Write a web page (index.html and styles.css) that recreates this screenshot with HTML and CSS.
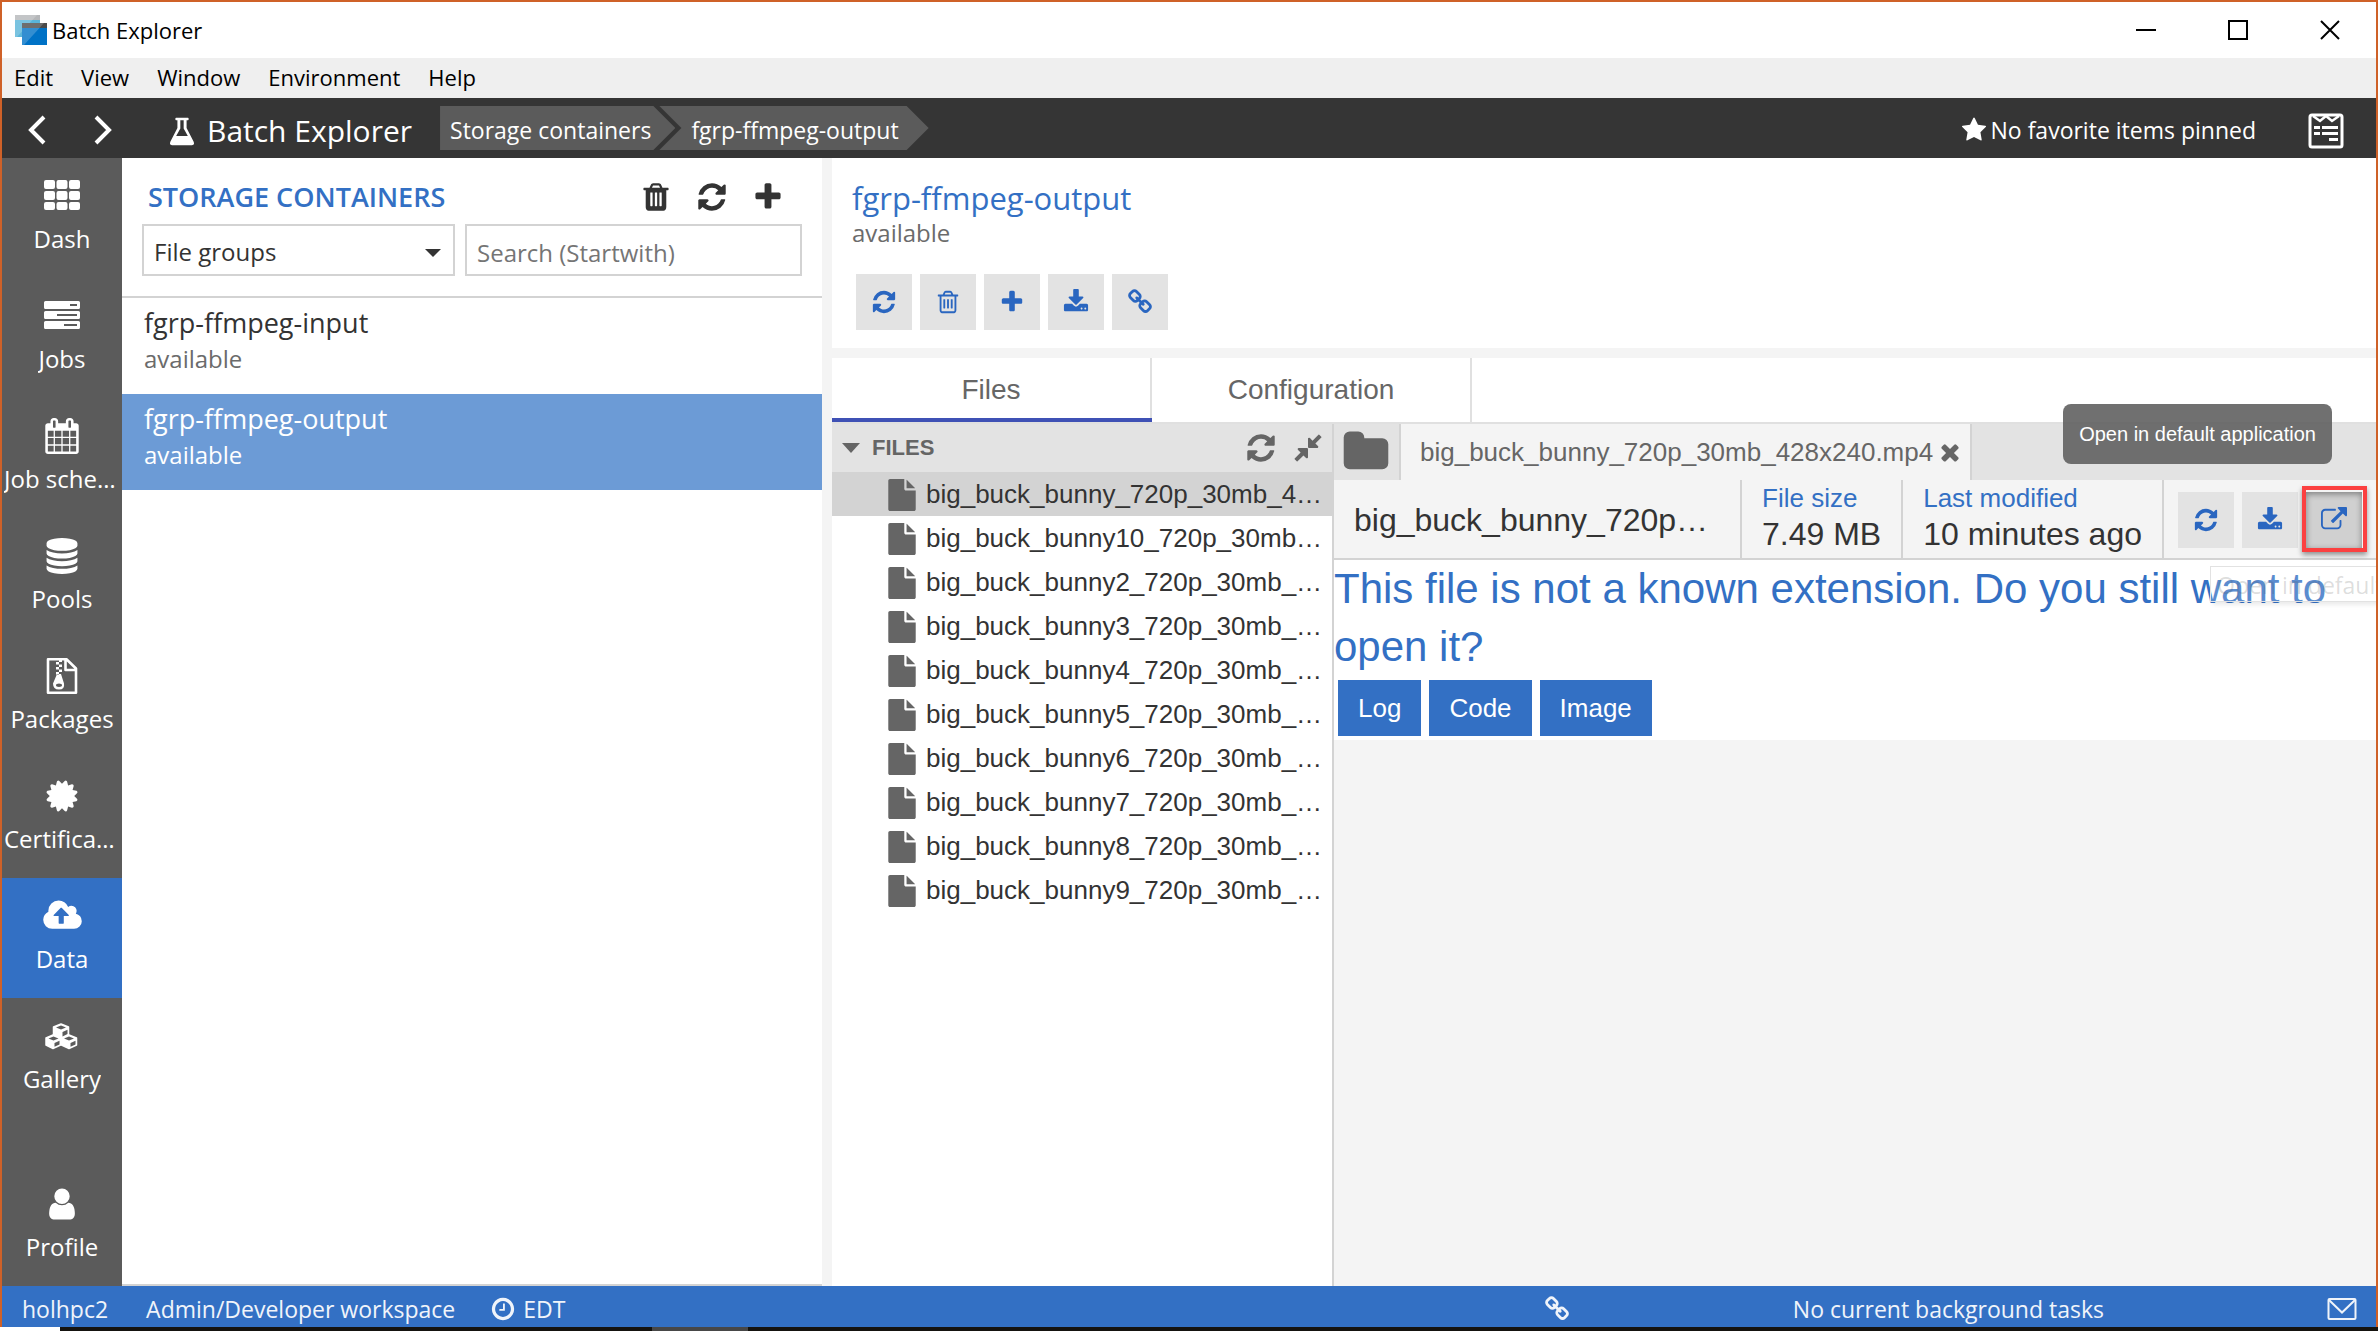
FILE: index.html
```html
<!DOCTYPE html>
<html lang="en">
<head>
<meta charset="utf-8">
<title>Batch Explorer</title>
<link rel="stylesheet" href="styles.css">
</head>
<body>
<svg class="sprite" aria-hidden="true">
  <symbol id="refresh" viewBox="0 0 1792 1792"><path d="M1639 1056q0 5-1 7-64 268-268 434.500t-478 166.500q-146 0-282.500-55t-243.500-157l-129 129q-19 19-45 19t-45-19-19-45v-448q0-26 19-45t45-19h448q26 0 45 19t19 45-19 45l-137 137q71 66 161 102t187 36q134 0 250-65t186-179q11-17 53-117 8-23 30-23h192q13 0 22.500 9.500t9.500 22.500zm25-800v448q0 26-19 45t-45 19h-448q-26 0-45-19t-19-45 19-45l138-138q-148-137-349-137-134 0-250 65t-186 179q-11 17-53 117-8 23-30 23h-199q-13 0-22.500-9.500t-9.500-22.500v-7q65-268 270-434.500t480-166.500q146 0 284 55.500t245 156.500l130-129q19-19 45-19t45 19 19 45z"/></symbol>
  <symbol id="plus" viewBox="0 0 1792 1792"><path d="M1600 736v192q0 40-28 68t-68 28h-416v416q0 40-28 68t-68 28h-192q-40 0-68-28t-28-68v-416h-416q-40 0-68-28t-28-68v-192q0-40 28-68t68-28h416v-416q0-40 28-68t68-28h192q40 0 68 28t28 68v416h416q40 0 68 28t28 68z"/></symbol>
  <symbol id="star" viewBox="0 0 1792 1792"><path d="M1728 647q0 22-26 48l-363 354 86 500q1 7 1 20 0 21-10.500 35.500t-30.500 14.500q-19 0-40-12l-449-236-449 236q-22 12-40 12-21 0-31.500-14.500t-10.500-35.500q0-6 2-20l86-500-364-354q-25-27-25-48 0-37 56-46l502-73 225-455q19-41 49-41t49 41l225 455 502 73q56 9 56 46z"/></symbol>
  <symbol id="times" viewBox="0 0 1792 1792"><path d="M1490 1322q0 40-28 68l-136 136q-28 28-68 28t-68-28l-294-294-294 294q-28 28-68 28t-68-28l-136-136q-28-28-28-68t28-68l294-294-294-294q-28-28-28-68t28-68l136-136q28-28 68-28t68 28l294 294 294-294q28-28 68-28t68 28l136 136q28 28 28 68t-28 68l-294 294 294 294q28 28 28 68z"/></symbol>
  <symbol id="trash-o" viewBox="0 0 1792 1792"><path d="M704 736v576q0 14-9 23t-23 9h-64q-14 0-23-9t-9-23v-576q0-14 9-23t23-9h64q14 0 23 9t9 23zm256 0v576q0 14-9 23t-23 9h-64q-14 0-23-9t-9-23v-576q0-14 9-23t23-9h64q14 0 23 9t9 23zm256 0v576q0 14-9 23t-23 9h-64q-14 0-23-9t-9-23v-576q0-14 9-23t23-9h64q14 0 23 9t9 23zm128 724v-948h-896v948q0 22 7 40.500t14.500 27 10.500 8.500h832q3 0 10.500-8.500t14.500-27 7-40.500zm-672-1076h448l-48-117q-7-9-17-11h-317q-10 2-17 11zm928 32v64q0 14-9 23t-23 9h-96v948q0 83-47 143.500t-113 60.500h-832q-66 0-113-58.500t-47-141.500v-952h-96q-14 0-23-9t-9-23v-64q0-14 9-23t23-9h309l70-167q15-37 54-63t79-26h320q40 0 79 26t54 63l70 167h309q14 0 23 9t9 23z"/></symbol>
  <symbol id="trash" viewBox="0 0 1792 1792"><path d="M704 1376v-704q0-14-9-23t-23-9h-64q-14 0-23 9t-9 23v704q0 14 9 23t23 9h64q14 0 23-9t9-23zm256 0v-704q0-14-9-23t-23-9h-64q-14 0-23 9t-9 23v704q0 14 9 23t23 9h64q14 0 23-9t9-23zm256 0v-704q0-14-9-23t-23-9h-64q-14 0-23 9t-9 23v704q0 14 9 23t23 9h64q14 0 23-9t9-23zm-544-992h448l-48-117q-7-9-17-11h-317q-10 2-17 11zm928 32v64q0 14-9 23t-23 9h-96v948q0 83-47 143.500t-113 60.500h-832q-66 0-113-58.500t-47-141.500v-952h-96q-14 0-23-9t-9-23v-64q0-14 9-23t23-9h309l70-167q15-37 54-63t79-26h320q40 0 79 26t54 63l70 167h309q14 0 23 9t9 23z"/></symbol>
  <symbol id="download" viewBox="0 0 1792 1792"><path d="M1344 1344q0-26-19-45t-45-19-45 19-19 45 19 45 45 19 45-19 19-45zm256 0q0-26-19-45t-45-19-45 19-19 45 19 45 45 19 45-19 19-45zm128-224v320q0 40-28 68t-68 28h-1472q-40 0-68-28t-28-68v-320q0-40 28-68t68-28h465l135 136q58 56 136 56t136-56l136-136h464q40 0 68 28t28 68zm-325-569q17 41-14 70l-448 448q-18 19-45 19t-45-19l-448-448q-31-29-14-70 17-39 59-39h256v-448q0-26 19-45t45-19h256q26 0 45 19t19 45v448h256q42 0 59 39z"/></symbol>
  <symbol id="link" viewBox="0 0 1792 1792"><path d="M1520 1216q0-40-28-68l-208-208q-28-28-68-28-42 0-72 32 3 3 19 18.500t21.500 21.500 15 19 13 25.500 3.500 27.500q0 40-28 68t-68 28q-15 0-27.500-3.500t-25.500-13-19-15-21.500-21.500-18.500-19q-33 31-33 73 0 40 28 68l206 207q27 27 68 27 40 0 68-26l147-146q28-28 28-67zm-703-705q0-40-28-68l-206-207q-28-28-68-28-39 0-68 27l-147 146q-28 28-28 67 0 40 28 68l208 208q27 27 68 27 42 0 72-31-3-3-19-18.500t-21.500-21.500-15-19-13-25.500-3.500-27.500q0-40 28-68t68-28q15 0 27.500 3.500t25.500 13 19 15 21.500 21.500 18.500 19q33-31 33-73zm895 705q0 120-85 203l-147 146q-83 83-203 83-121 0-204-85l-206-207q-83-83-83-203 0-123 88-209l-88-88q-86 88-208 88-120 0-204-84l-208-208q-84-84-84-204t85-203l147-146q83-83 203-83 121 0 204 85l206 207q83 83 83 203 0 123-88 209l88 88q86-88 208-88 120 0 204 84l208 208q84 84 84 204z"/></symbol>
  <symbol id="external" viewBox="0 0 1792 1792"><path d="M1408 928v320q0 119-84.500 203.500t-203.500 84.500h-832q-119 0-203.500-84.500t-84.500-203.500v-832q0-119 84.500-203.500t203.500-84.500h704q14 0 23 9t9 23v64q0 14-9 23t-23 9h-704q-66 0-113 47t-47 113v832q0 66 47 113t113 47h832q66 0 113-47t47-113v-320q0-14 9-23t23-9h64q14 0 23 9t9 23zm384-864v512q0 26-19 45t-45 19-45-19l-176-176-652 652q-10 10-23 10t-23-10l-114-114q-10-10-10-23t10-23l652-652-176-176q-19-19-19-45t19-45 45-19h512q26 0 45 19t19 45z"/></symbol>
  <symbol id="cloud" viewBox="-64 0 1920 1792"><path d="M1216 864q0-14-9-23l-352-352q-9-9-23-9t-23 9l-351 351q-10 12-10 24 0 14 9 23t23 9h224v352q0 13 9.500 22.500t22.500 9.500h192q13 0 22.500-9.500t9.500-22.500v-352h224q13 0 22.500-9.500t9.500-22.500zm640 288q0 159-112.500 271.500t-271.500 112.500h-1088q-185 0-316.500-131.500t-131.500-316.500q0-130 70-240t188-165q-2-30-2-43 0-212 150-362t362-150q156 0 285.500 87t188.500 231q71-62 166-62 106 0 181 75t75 181q0 76-41 138 130 31 213.500 135.500t83.500 238.500z"/></symbol>
  <symbol id="certificate" viewBox="0 0 1792 1792"><path d="M1504 896l138 135q30 28 20 70-12 41-52 51l-188 48 53 186q12 41-19 70-29 31-70 19l-186-53-48 188q-10 40-51 52-12 2-19 2-31 0-51-22l-135-138-135 138q-28 30-70 20-41-11-51-52l-48-188-186 53q-41 12-70-19-31-29-19-70l53-186-188-48q-40-10-52-51-10-42 20-70l138-135-138-135q-30-28-20-70 12-41 52-51l188-48-53-186q-12-41 19-70 29-31 70-19l186 53 48-188q10-41 51-51 41-12 70 19l135 139 135-139q29-30 70-19 41 10 51 51l48 188 186-53q41-12 70 19 31 29 19 70l-53 186 188 48q40 10 52 51 10 42-20 70z"/></symbol>
  <symbol id="user" viewBox="0 0 1792 1792"><path d="M1536 1399q0 109-62.500 187t-150.500 78h-854q-88 0-150.500-78t-62.500-187q0-85 8.500-160.500t31.500-152 58.500-131 94-89 134.500-34.500q131 128 313 128t313-128q76 0 134.500 34.500t94 89 58.500 131 31.500 152 8.500 160.500zm-256-887q0 159-112.500 271.500t-271.500 112.500-271.500-112.500-112.500-271.500 112.500-271.500 271.500-112.500 271.500 112.500 112.500 271.500z"/></symbol>
  <symbol id="database" viewBox="0 0 1792 1792"><path d="M896 768q237 0 443-43t325-127v170q0 69-103 128t-280 93.500-385 34.500-385-34.500-280-93.500-103-128v-170q119 84 325 127t443 43zm0 768q237 0 443-43t325-127v170q0 69-103 128t-280 93.500-385 34.500-385-34.500-280-93.500-103-128v-170q119 84 325 127t443 43zm0-384q237 0 443-43t325-127v170q0 69-103 128t-280 93.500-385 34.500-385-34.500-280-93.500-103-128v-170q119 84 325 127t443 43zm0-1152q208 0 385 34.500t280 93.500 103 128v128q0 69-103 128t-280 93.500-385 34.500-385-34.500-280-93.500-103-128v-128q0-69 103-128t280-93.500 385-34.500z"/></symbol>
  <symbol id="compress" viewBox="0 0 1792 1792"><path d="M896 960v448q0 26-19 45t-45 19-45-19l-144-144-332 332q-10 10-23 10t-23-10l-114-114q-10-10-10-23t10-23l332-332-144-144q-19-19-19-45t19-45 45-19h448q26 0 45 19t19 45zm755-672q0 13-10 23l-332 332 144 144q19 19 19 45t-19 45-45 19h-448q-26 0-45-19t-19-45v-448q0-26 19-45t45-19 45 19l144 144 332-332q10-10 23-10t23 10l114 114q10 10 10 23z"/></symbol>
  <symbol id="folder" viewBox="0 0 1792 1792"><path d="M1728 608v704q0 92-66 158t-158 66h-1216q-92 0-158-66t-66-158v-960q0-92 66-158t158-66h320q92 0 158 66t66 158v32h672q92 0 158 66t66 158z"/></symbol>
  <symbol id="file" viewBox="0 0 1792 1792"><path d="M1152 512v-472q22 14 36 28l408 408q14 14 28 36h-472zm-128 32q0 40 28 68t68 28h544v1056q0 40-28 68t-68 28h-1344q-40 0-68-28t-28-68v-1600q0-40 28-68t68-28h800v544z"/></symbol>
  <symbol id="calendar" viewBox="0 0 1792 1792"><path d="M192 1664h288v-288h-288v288zm352 0h320v-288h-320v288zm-352-352h288v-320h-288v320zm352 0h320v-320h-320v320zm-352-384h288v-288h-288v288zm736 736h320v-288h-320v288zm-384-736h320v-288h-320v288zm768 736h288v-288h-288v288zm-384-352h320v-320h-320v320zm-352-864v-288q0-13-9.500-22.500t-22.500-9.500h-64q-13 0-22.500 9.500t-9.500 22.500v288q0 13 9.500 22.500t22.500 9.500h64q13 0 22.500-9.500t9.500-22.500zm736 864h288v-320h-288v320zm-384-384h320v-288h-320v288zm384 0h288v-288h-288v288zm32-480v-288q0-13-9.500-22.500t-22.500-9.500h-64q-13 0-22.500 9.500t-9.500 22.500v288q0 13 9.500 22.500t22.500 9.500h64q13 0 22.500-9.500t9.500-22.500zm384-64v1280q0 52-38 90t-90 38h-1408q-52 0-90-38t-38-90v-1280q0-52 38-90t90-38h128v-96q0-66 47-113t113-47h64q66 0 113 47t47 113v96h384v-96q0-66 47-113t113-47h64q66 0 113 47t47 113v96h128q52 0 90 38t38 90z"/></symbol>
  <symbol id="clock" viewBox="0 0 1792 1792"><path d="M1024 544v448q0 14-9 23t-23 9h-320q-14 0-23-9t-9-23v-64q0-14 9-23t23-9h224v-352q0-14 9-23t23-9h64q14 0 23 9t9 23zm416 352q0-148-73-273t-198-198-273-73-273 73-198 198-73 273 73 273 198 198 273 73 273-73 198-198 73-273zm224 0q0 209-103 385.500t-279.500 279.500-385.500 103-385.500-103-279.500-279.500-103-385.500 103-385.500 279.500-279.500 385.500-103 385.500 103 279.500 279.500 103 385.500z"/></symbol>
  <symbol id="grid" viewBox="0 0 36 36"><path d="M2 2h7q2 0 2 2v5q0 2-2 2H2q-2 0-2-2V4q0-2 2-2zm12.500 0h7q2 0 2 2v5q0 2-2 2h-7q-2 0-2-2V4q0-2 2-2zM27 2h7q2 0 2 2v5q0 2-2 2h-7q-2 0-2-2V4q0-2 2-2zM2 13h7q2 0 2 2v5q0 2-2 2H2q-2 0-2-2v-5q0-2 2-2zm12.500 0h7q2 0 2 2v5q0 2-2 2h-7q-2 0-2-2v-5q0-2 2-2zM27 13h7q2 0 2 2v5q0 2-2 2h-7q-2 0-2-2v-5q0-2 2-2zM2 24h7q2 0 2 2v4q0 2-2 2H2q-2 0-2-2v-4q0-2 2-2zm12.500 0h7q2 0 2 2v4q0 2-2 2h-7q-2 0-2-2v-4q0-2 2-2zM27 24h7q2 0 2 2v4q0 2-2 2h-7q-2 0-2-2v-4q0-2 2-2z"/></symbol>
  <symbol id="tasks" viewBox="0 0 36 36"><path fill-rule="evenodd" d="M1.500 3h33Q36 3 36 4.500v5q0 1.500-1.500 1.500h-33Q0 11 0 9.500v-5Q0 3 1.500 3zM26 6v2h7V6zM1.500 13h33q1.500 0 1.500 1.500v5q0 1.500-1.500 1.500h-33Q0 21 0 19.500v-5Q0 13 1.500 13zM13 16v2h20v-2zM1.500 23h33q1.500 0 1.500 1.500v5q0 1.500-1.500 1.500h-33Q0 31 0 29.500v-5Q0 23 1.500 23zM20 26v2h13v-2z"/></symbol>
  <symbol id="zip" viewBox="0 0 36 36"><path fill="none" stroke="currentColor" stroke-width="2.600" stroke-linejoin="round" d="M4 1.300h18.500L32 10.500v24.200H4zM21.500 1.500V12H32"/><path fill-rule="evenodd" d="M15 1h3v3h-3zM12 4h3v2.500h-3zM15 6.500h3V9h-3zM12 9h3v2.500h-3zM15 11.500h3V14h-3zM12 14h3v2.500h-3zM13 16h4l3 9.500q1 6-5 6t-6-6zM15 25.500q-3 0-3 1.700t3 1.700 3-1.700-3-1.700z"/></symbol>
  <symbol id="cubes" viewBox="0 0 36 36"><g fill="currentColor" stroke="currentColor" stroke-width="1.500" stroke-linejoin="round"><path d="M17 6l7.500 3v8L17 20l-7.500-3V9z"/><path d="M9 17l7.500 3v7L9 30.500 2 27v-7z"/><path d="M25 17l7.500 3v7L25 30.500 17.500 27v-7z"/></g><g class="cube-holes"><path d="M17 7.500l5 2-5 2-5-2zM9.500 18.500l5 2-5 2-5-2zM25 18.500l5 2-5 2-5-2zM18.500 14l5-2.200v4.200l-5 2.400zM10.500 25l5-2.200v3.600l-5 2.400zM26.500 25l5-2.200v3.600l-5 2.400z"/></g></symbol>
  <symbol id="flask" viewBox="0 0 32 36"><path fill-rule="evenodd" d="M9 2h14q1 0 1 1.500T23 5h-1.500v9.500L30 31q1.500 4-2 4H4q-3.500 0-2-4l8.500-16.500V5H9Q8 5 8 3.500T9 2zM14 5v10l-5 9h14l-5-9V5z"/></symbol>
  <symbol id="left" viewBox="0 0 20 30"><path fill="none" stroke="currentColor" stroke-width="4" d="M17 2L4 15l13 13"/></symbol>
  <symbol id="right" viewBox="0 0 20 30"><path fill="none" stroke="currentColor" stroke-width="4" d="M3 2l13 13L3 28"/></symbol>
  <symbol id="report" viewBox="0 0 36 36"><rect x="2" y="2" width="32" height="32" rx="2" fill="none" stroke="currentColor" stroke-width="3"/><path fill="none" stroke="currentColor" stroke-width="2.500" d="M5 3l7 5 6-5 6 5 7-5"/><path d="M6 13h6v3H6zM14 13h16v3H14zM6 19h6v3H6zM14 19h16v3H14zM21 25h9v3h-9z"/></symbol>
  <symbol id="mail" viewBox="0 0 30 24"><rect x="1.500" y="2" width="27" height="20" rx="1" fill="none" stroke="currentColor" stroke-width="2"/><path fill="none" stroke="currentColor" stroke-width="2" d="M2 3l13 12.500L28 3"/></symbol>
  <symbol id="win-min" viewBox="0 0 20 20"><path d="M0 9h20v2H0z"/></symbol>
  <symbol id="win-max" viewBox="0 0 20 20"><path fill="none" stroke="currentColor" stroke-width="2" d="M1 1h18v18H1z"/></symbol>
  <symbol id="win-close" viewBox="0 0 20 20"><path fill="none" stroke="currentColor" stroke-width="2" d="M1 1l18 18M19 1L1 19"/></symbol>
  <symbol id="logo" viewBox="0 0 32 30"><path fill="#59b4d9" d="M0 0h25v22H0z"/><path fill="#b5b7b9" d="M0 0h25v5H0z"/><path fill="#fff" opacity=".2" d="M0 0h22L2 22H0z"/><path fill="#0072c6" d="M7 8h25v22H7z"/><path fill="#4a4a4a" d="M7 8h25v5H7z"/><path fill="#fff" opacity=".2" d="M7 8h22L9 30H7z"/></symbol>
</svg>

<div class="window">
  <header class="titlebar">
    <svg class="logo"><use href="#logo"/></svg>
    <span class="window-title">Batch Explorer</span>
    <button class="win-btn" aria-label="Minimize"><svg><use href="#win-min"/></svg></button>
    <button class="win-btn" aria-label="Maximize"><svg><use href="#win-max"/></svg></button>
    <button class="win-btn" aria-label="Close"><svg><use href="#win-close"/></svg></button>
  </header>
  <nav class="menubar" aria-label="Menu">
    <a href="#">Edit</a><a href="#">View</a><a href="#">Window</a><a href="#">Environment</a><a href="#">Help</a>
  </nav>
  <div class="toolbar">
    <div class="history">
      <button aria-label="Back"><svg><use href="#left"/></svg></button>
      <button aria-label="Forward"><svg><use href="#right"/></svg></button>
    </div>
    <h1 class="brand"><svg><use href="#flask"/></svg>Batch Explorer</h1>
    <nav class="crumbs" aria-label="Breadcrumb">
      <a class="crumb" href="#">Storage containers</a>
      <a class="crumb crumb-next" href="#">fgrp-ffmpeg-output</a>
    </nav>
    <button class="favorites"><svg class="icon i26"><use href="#star"/></svg>No favorite items pinned</button>
    <button class="report" aria-label="Notifications"><svg class="icon i36"><use href="#report"/></svg></button>
  </div>

  <div class="body">
    <nav class="sidebar" aria-label="Main">
      <a href="#"><svg class="icon i36"><use href="#grid"/></svg><span>Dash</span></a>
      <a href="#"><svg class="icon i36"><use href="#tasks"/></svg><span>Jobs</span></a>
      <a href="#"><svg class="icon i36"><use href="#calendar"/></svg><span>Job schedules</span></a>
      <a href="#"><svg class="icon i36"><use href="#database"/></svg><span>Pools</span></a>
      <a href="#"><svg class="icon i36"><use href="#zip"/></svg><span>Packages</span></a>
      <a href="#"><svg class="icon i36"><use href="#certificate"/></svg><span>Certificates</span></a>
      <a href="#" class="active"><svg class="icon i36 wide"><use href="#cloud"/></svg><span>Data</span></a>
      <a href="#"><svg class="icon i36"><use href="#cubes"/></svg><span>Gallery</span></a>
      <a href="#" class="profile"><svg class="icon i36"><use href="#user"/></svg><span>Profile</span></a>
    </nav>

    <section class="browse">
      <div class="browse-head">
        <div class="browse-title">
          <h2>STORAGE CONTAINERS</h2>
          <button aria-label="Delete"><svg class="icon i32"><use href="#trash"/></svg></button>
          <button aria-label="Refresh"><svg class="icon i32"><use href="#refresh"/></svg></button>
          <button aria-label="Add"><svg class="icon i32"><use href="#plus"/></svg></button>
        </div>
        <div class="filters">
          <div class="select-wrap"><select aria-label="Container type"><option>File groups</option></select></div>
          <input type="text" aria-label="Search" placeholder="Search (Startwith)">
        </div>
      </div>
      <a class="container-item" href="#"><span class="name">fgrp-ffmpeg-input</span><span class="state">available</span></a>
      <a class="container-item selected" href="#"><span class="name">fgrp-ffmpeg-output</span><span class="state">available</span></a>
    </section>

    <main class="details">
      <section class="summary">
        <h2>fgrp-ffmpeg-output</h2>
        <p>available</p>
        <div class="actions">
          <button class="action" aria-label="Refresh"><svg class="icon i26"><use href="#refresh"/></svg></button>
          <button class="action" aria-label="Delete"><svg class="icon i26"><use href="#trash-o"/></svg></button>
          <button class="action" aria-label="Add files"><svg class="icon i26"><use href="#plus"/></svg></button>
          <button class="action" aria-label="Download"><svg class="icon i26"><use href="#download"/></svg></button>
          <button class="action" aria-label="Linked jobs"><svg class="icon i26"><use href="#link"/></svg></button>
        </div>
      </section>
      <section class="content">
        <div class="tabs" role="tablist">
          <button role="tab" class="current" aria-selected="true">Files</button>
          <button role="tab">Configuration</button>
        </div>
        <div class="explorer">
          <div class="tree">
            <div class="tree-head">
              <span class="caret"></span><h3>FILES</h3>
              <button aria-label="Refresh"><svg class="icon i32"><use href="#refresh"/></svg></button>
              <button aria-label="Collapse all"><svg class="icon i32"><use href="#compress"/></svg></button>
            </div>
            <ul>
              <li class="on"><svg class="icon i32"><use href="#file"/></svg><span>big_buck_bunny_720p_30mb_428x240.mp4</span></li>
              <li><svg class="icon i32"><use href="#file"/></svg><span>big_buck_bunny10_720p_30mb_428x240.mp4</span></li>
              <li><svg class="icon i32"><use href="#file"/></svg><span>big_buck_bunny2_720p_30mb_428x240.mp4</span></li>
              <li><svg class="icon i32"><use href="#file"/></svg><span>big_buck_bunny3_720p_30mb_428x240.mp4</span></li>
              <li><svg class="icon i32"><use href="#file"/></svg><span>big_buck_bunny4_720p_30mb_428x240.mp4</span></li>
              <li><svg class="icon i32"><use href="#file"/></svg><span>big_buck_bunny5_720p_30mb_428x240.mp4</span></li>
              <li><svg class="icon i32"><use href="#file"/></svg><span>big_buck_bunny6_720p_30mb_428x240.mp4</span></li>
              <li><svg class="icon i32"><use href="#file"/></svg><span>big_buck_bunny7_720p_30mb_428x240.mp4</span></li>
              <li><svg class="icon i32"><use href="#file"/></svg><span>big_buck_bunny8_720p_30mb_428x240.mp4</span></li>
              <li><svg class="icon i32"><use href="#file"/></svg><span>big_buck_bunny9_720p_30mb_428x240.mp4</span></li>
            </ul>
          </div>
          <div class="viewer">
            <div class="file-tabs">
              <button class="folder-tab" aria-label="Folder"><svg class="icon i48"><use href="#folder"/></svg></button>
              <div class="file-tab"><span>big_buck_bunny_720p_30mb_428x240.mp4</span><button aria-label="Close file"><svg class="icon i26"><use href="#times"/></svg></button></div>
            </div>
            <div class="file-info">
              <div class="file-name">big_buck_bunny_720p_30mb_428x240.mp4</div>
              <dl><dt>File size</dt><dd>7.49 MB</dd></dl>
              <dl><dt>Last modified</dt><dd>10 minutes ago</dd></dl>
              <div class="file-actions">
                <button class="action" aria-label="Refresh"><svg class="icon i26"><use href="#refresh"/></svg></button>
                <button class="action" aria-label="Download"><svg class="icon i26"><use href="#download"/></svg></button>
                <div class="hovered">
                  <button class="action pressed" aria-label="Open in default application"><svg class="icon i26"><use href="#external"/></svg></button>
                  <div class="highlight"></div>
                  <div class="tooltip" role="tooltip">Open in default application</div>
                  <div class="native-tip">Open in default application</div>
                </div>
              </div>
            </div>
            <div class="prompt">
              <p>This file is not a known extension. Do you still want to open it?</p>
              <div class="choices"><button>Log</button><button>Code</button><button>Image</button></div>
            </div>
          </div>
        </div>
      </section>
    </main>
  </div>

  <footer class="status">
    <span class="account">holhpc2</span>
    <span class="workspace">Admin/Developer workspace</span>
    <span class="zone"><svg class="icon i26"><use href="#clock"/></svg>EDT</span>
    <div class="status-right">
      <svg class="icon i26"><use href="#link"/></svg>
      <span>No current background tasks</span>
      <svg class="mail"><use href="#mail"/></svg>
    </div>
  </footer>
</div>
<div class="taskbar"></div>
</body>
</html>
```
FILE: styles.css
```css
* { box-sizing: border-box; }
:root {
  --ui: "Open Sans", "Noto Sans", sans-serif;
  --alt: "Liberation Sans", Arial, sans-serif;
  --blue: #3370c4;
  --dark: #353535;
  --gray: #5b5b5b;
  --line: #d3d3d3;
  --pale: #f4f4f4;
  --soft: #e3e3e3;
}
body {
  margin: 0;
  min-height: 100vh;
  display: flex;
  flex-direction: column;
  font-family: var(--ui);
  font-size: 23px;
  line-height: 32px;
  color: #333;
  background: #fff;
}
h1, h2, h3, p, ul, dl, dd { margin: 0; padding: 0; font-weight: 400; }
a { color: inherit; text-decoration: none; }
button { margin: 0; padding: 0; border: 0; background: none; color: inherit; font: inherit; }
.sprite { display: none; }
svg { display: block; fill: currentColor; flex: none; }
.i26 { width: 26px; height: 26px; }
.i32 { width: 32px; height: 32px; }
.i36 { width: 36px; height: 36px; }
.i48 { width: 48px; height: 48px; }
.i36.wide { width: 39px; }
.cube-holes { fill: #5b5b5b; }

.window {
  flex: 1;
  display: flex;
  flex-direction: column;
  border: 2px solid #cf6128;
  border-bottom: 0;
  overflow: hidden;
}
.taskbar {
  height: 4px;
  background: linear-gradient(90deg, #fff 60px, #15130f 60px 652px, #474747 652px 748px, #15130f 748px);
}

.titlebar { height: 56px; display: flex; align-items: center; padding-left: 13px; color: #000; font-size: 22px; }
.logo { width: 32px; height: 30px; }
.window-title { margin-left: 5px; margin-right: auto; }
.win-btn { width: 92px; height: 56px; display: flex; align-items: center; justify-content: center; }
.win-btn svg { width: 20px; height: 20px; }
.menubar { height: 40px; display: flex; align-items: center; gap: 28px; padding: 0 0 2px 12px; background: #efefef; color: #000; font-size: 22px; }

.toolbar { height: 60px; display: flex; align-items: center; background: var(--dark); color: #fff; }
.history { display: flex; gap: 46px; padding: 4px 0 0 25px; }
.history svg { width: 20px; height: 30px; }
.brand { display: flex; align-items: center; gap: 11px; margin: 6px 0 0 55px; font-size: 30px; line-height: 40px; white-space: nowrap; }
.brand svg { width: 28px; height: 30px; }
.crumbs { display: flex; margin-left: 28px; white-space: nowrap; }
.crumb {
  height: 44px;
  padding: 0 24px 0 10px;
  line-height: 48px;
  background: var(--gray);
  clip-path: polygon(0 0, calc(100% - 22px) 0, 100% 50%, calc(100% - 22px) 100%, 0 100%);
}
.crumb-next {
  margin-left: -16px;
  padding: 0 30px 0 32px;
  clip-path: polygon(0 0, calc(100% - 22px) 0, 100% 50%, calc(100% - 22px) 100%, 0 100%, 22px 50%);
}
.favorites { display: flex; align-items: center; gap: 4px; margin: 4px 0 0 auto; white-space: nowrap; }
.report { margin: 6px 32px 0 52px; }

.body { flex: 1; display: flex; min-height: 0; }
.sidebar { width: 120px; flex: none; display: flex; flex-direction: column; background: var(--gray); color: #fff; font-size: 24px; }
.sidebar a { height: 120px; padding-top: 20px; display: flex; flex-direction: column; align-items: center; gap: 9px; }
.sidebar span { max-width: 116px; overflow: hidden; text-overflow: ellipsis; white-space: nowrap; }
.sidebar .active { background: var(--blue); }
.sidebar .profile { margin-top: auto; }

.browse { width: 700px; flex: none; background: #fff; border-bottom: 2px solid var(--line); font-size: 24px; }
.browse-head { height: 140px; padding: 16px 20px 0; border-bottom: 2px solid var(--line); }
.browse-title { display: flex; align-items: center; height: 46px; gap: 24px; padding: 0 18px 0 6px; }
.browse-title h2 { margin-right: auto; color: var(--blue); font-size: 27px; font-weight: 600; white-space: nowrap; }
.filters { display: flex; gap: 10px; margin-top: 4px; }
.select-wrap { position: relative; width: 313px; }
.select-wrap::after {
  content: "";
  position: absolute;
  right: 14px;
  top: 25px;
  border: 8px solid transparent;
  border-top-color: #333;
  border-bottom: 0;
  pointer-events: none;
}
.filters select, .filters input {
  width: 100%;
  height: 52px;
  padding: 4px 10px 0;
  border: 2px solid var(--line);
  border-radius: 0;
  background: #fff;
  color: #333;
  font: inherit;
  appearance: none;
}
.filters input { flex: 1; min-width: 0; }
.filters input::placeholder { color: #757575; opacity: 1; }
.container-item { display: flex; flex-direction: column; height: 96px; padding: 7px 22px; }
.container-item .name { font-size: 27px; line-height: 36px; }
.container-item .state { line-height: 36px; color: #6b6b6b; }
.container-item.selected { background: #6c9bd6; color: #fff; }
.container-item.selected .state { color: #fff; }

.details { flex: 1; min-width: 0; margin-left: 10px; display: flex; flex-direction: column; background: var(--pale); box-shadow: -10px 0 var(--pale); }
.summary { height: 190px; padding: 22px 20px 0; background: #fff; }
.summary h2 { color: var(--blue); font-size: 31px; line-height: 36px; }
.summary p { color: #6b6b6b; font-size: 24px; line-height: 34px; }
.actions { display: flex; gap: 8px; margin: 24px 4px 0; }
.action { width: 56px; height: 56px; display: flex; align-items: center; justify-content: center; background: var(--soft); color: #2a66c0; }

.content { flex: 1; margin-top: 10px; display: flex; flex-direction: column; font-family: var(--alt); }
.tabs { height: 66px; display: flex; background: #fff; border-bottom: 2px solid #e0e0e0; }
.tabs button { width: 320px; border-right: 2px solid #e0e0e0; color: #666; font-size: 28px; }
.tabs .current { border-bottom: 4px solid #3f51b5; padding: 4px 2px 0 0; border-right: 0; box-shadow: inset -2px 0 #e0e0e0; }
.explorer { flex: 1; display: flex; }
.tree { width: 502px; flex: none; background: #fff; border-right: 2px solid var(--line); }
.tree-head { height: 48px; display: flex; align-items: center; padding: 0 8px 0 10px; background: var(--soft); color: #656565; }
.caret { border: 9px solid transparent; border-top: 10px solid #656565; border-bottom: 0; }
.tree-head h3 { margin: 0 auto 0 12px; font-size: 22px; font-weight: 700; }
.tree-head button + button { margin-left: 15px; }
.tree ul { list-style: none; }
.tree li { height: 44px; display: flex; align-items: center; gap: 8px; padding: 2px 5px 0 54px; line-height: 34px; font-size: 26px; }
.tree li svg { color: #656565; }
.tree li span { padding-bottom: 2px; overflow: hidden; text-overflow: ellipsis; white-space: nowrap; }
.tree .on { background: var(--line); }

.viewer { flex: 1; min-width: 0; background: var(--pale); }
.file-tabs { height: 56px; display: flex; background: var(--soft); }
.folder-tab { width: 67px; display: flex; align-items: center; padding-left: 8px; border-right: 2px solid var(--line); color: #656565; }
.file-tab { display: flex; align-items: center; gap: 4px; padding: 0 7px 0 19px; background: var(--pale); border-right: 2px solid var(--line); color: #666; font-size: 26px; }
.file-info { height: 80px; display: flex; border-bottom: 2px solid var(--line); }
.file-name { flex: 1; min-width: 0; padding: 0 20px; line-height: 80px; font-size: 32px; overflow: hidden; text-overflow: ellipsis; white-space: nowrap; }
.file-info dl { padding: 0 20px; border-left: 2px solid var(--line); white-space: nowrap; }
.file-info dt { color: var(--blue); font-size: 26px; line-height: 36px; }
.file-info dd { font-size: 32px; line-height: 36px; }
.file-actions { display: flex; align-items: center; gap: 8px; padding: 2px 14px 0; border-left: 2px solid var(--line); }
.hovered { position: relative; }
.pressed { background: #d0d0d0; box-shadow: inset 0 2px 6px rgba(0, 0, 0, .4); }
.highlight { position: absolute; inset: -6px -5px -4px -4px; border: 4px solid #fb4040; box-shadow: 0 3px 5px rgba(0, 0, 0, .4); pointer-events: none; }
.tooltip {
  position: absolute;
  right: 30px;
  bottom: 84px;
  padding: 14px 16px;
  border-radius: 8px;
  background: rgba(97, 97, 97, .9);
  color: #fff;
  font-size: 20px;
  white-space: nowrap;
}
.native-tip {
  position: absolute;
  left: -96px;
  top: 74px;
  width: 166px;
  height: 36px;
  padding-left: 6px;
  border: 1px solid #e2e2e2;
  border-right: 0;
  background: rgba(255, 255, 255, .2);
  box-shadow: 3px 3px 4px rgba(0, 0, 0, .08);
  color: rgba(80, 80, 80, .2);
  font: 23px/36px var(--ui);
  overflow: hidden;
  white-space: nowrap;
}
.prompt { padding-bottom: 4px; background: #fff; }
.prompt p { color: var(--blue); font-size: 42px; line-height: 58px; }
.choices { display: flex; gap: 8px; padding: 4px 4px 0; }
.choices button { height: 56px; padding: 0 20px; background: var(--blue); color: #fff; font-size: 26px; }

.status { height: 41px; display: flex; align-items: center; padding: 4px 19px 0 20px; background: var(--blue); color: #f0f4fa; white-space: nowrap; }
.workspace { margin-left: 38px; }
.zone { display: flex; align-items: center; gap: 7px; margin-left: 35px; }
.status-right { display: flex; align-items: center; gap: 223px; margin-left: auto; }
.mail { width: 30px; height: 24px; }
```
